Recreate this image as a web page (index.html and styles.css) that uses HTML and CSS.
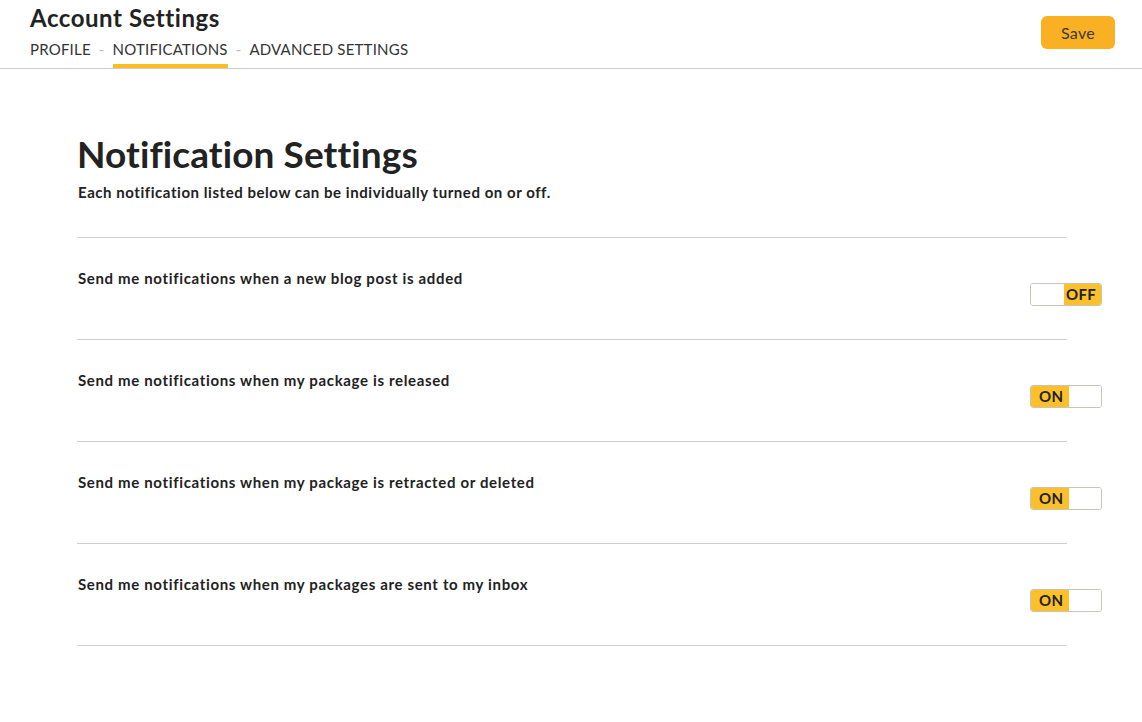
FILE: index.html
```html
<!DOCTYPE html>
<html>
<head>
<meta charset="utf-8">
<link rel="stylesheet" href="styles.css">
</head>
<body>
<header class="topbar">
  <div class="topbar-left">
    <h1 class="page-title">Account Settings</h1>
    <nav class="tabs">
      <a class="tab">PROFILE</a>
      <span class="sep">-</span>
      <a class="tab active">NOTIFICATIONS</a>
      <span class="sep">-</span>
      <a class="tab">ADVANCED SETTINGS</a>
    </nav>
  </div>
  <button class="save-btn">Save</button>
</header>
<main class="content">
  <h2 class="section-title">Notification Settings</h2>
  <p class="section-desc">Each notification listed below can be individually turned on or off.</p>
  <div class="list">
    <div class="row">
      <span class="row-label">Send me notifications when a new blog post is added</span>
      <div class="toggle off"><span class="half blank"></span><span class="half lit">OFF</span></div>
    </div>
    <div class="row">
      <span class="row-label">Send me notifications when my package is released</span>
      <div class="toggle on"><span class="half lit">ON</span><span class="half blank"></span></div>
    </div>
    <div class="row">
      <span class="row-label">Send me notifications when my package is retracted or deleted</span>
      <div class="toggle on"><span class="half lit">ON</span><span class="half blank"></span></div>
    </div>
    <div class="row">
      <span class="row-label">Send me notifications when my packages are sent to my inbox</span>
      <div class="toggle on"><span class="half lit">ON</span><span class="half blank"></span></div>
    </div>
  </div>
</main>
</body>
</html>
```
FILE: styles.css
```css
* { box-sizing: border-box; }
body {
  margin: 0;
  font-family: "Lato", "Noto Sans", sans-serif;
  color: #222;
  background: #fff;
}
.topbar {
  display: flex;
  justify-content: space-between;
  align-items: flex-start;
  height: 69px;
  border-bottom: 1px solid #cfcfcf;
  padding: 0 27px 0 30px;
}
.page-title {
  margin: 4px 0 0 0;
  font-size: 24px;
  line-height: 28px;
  font-weight: 700;
  letter-spacing: 0.55px;
}
.tabs {
  display: flex;
  align-items: flex-start;
  margin-top: 7px;
  font-size: 15px;
  letter-spacing: 0.2px;
}
.tab {
  display: block;
  height: 29px;
  line-height: 20px;
  color: #333;
  border-bottom: 4px solid transparent;
}
.tab.active { border-bottom-color: #fbbd24; }
.sep {
  color: #bbb;
  margin: 0 8px;
  line-height: 20px;
}
.save-btn {
  margin-top: 16px;
  width: 74px;
  height: 33px;
  background: #f9b022;
  border: none;
  border-radius: 6px;
  font-family: inherit;
  font-size: 16px;
  color: #3a3a3a;
  letter-spacing: 0.3px;
}
.content {
  margin-left: 77px;
  width: 990px;
  padding-top: 61px;
}
.section-title {
  margin: 0;
  font-size: 37px;
  line-height: 48px;
  font-weight: 700;
  letter-spacing: 0.1px;
}
.section-desc {
  margin: 4px 0 0 1px;
  font-size: 15px;
  line-height: 20px;
  font-weight: 700;
  letter-spacing: 0.55px;
}
.list {
  margin-top: 35px;
  border-bottom: 1px solid #cfcfcf;
}
.row {
  display: flex;
  justify-content: space-between;
  align-items: flex-start;
  height: 102px;
  border-top: 1px solid #cfcfcf;
  padding-top: 30px;
}
.row-label {
  margin-left: 1px;
  font-size: 15px;
  line-height: 20px;
  font-weight: 700;
  letter-spacing: 0.65px;
}
.toggle {
  display: flex;
  width: 72px;
  height: 23px;
  margin-top: 15px;
  margin-right: -35px;
  border: 1px solid #c8c4b8;
  border-radius: 3px;
  overflow: hidden;
  font-size: 15px;
  font-weight: 700;
  line-height: 20px;
  letter-spacing: 0.3px;
}
.half { display: block; height: 100%; }
.lit { background: #fcc02a; color: #222; }
.blank { background: #fff; }
.toggle.off .blank { width: 33px; }
.toggle.off .lit { flex: 1; padding-left: 2px; }
.toggle.on .lit { width: 38px; padding-left: 8px; }
.toggle.on .blank { flex: 1; }
```
